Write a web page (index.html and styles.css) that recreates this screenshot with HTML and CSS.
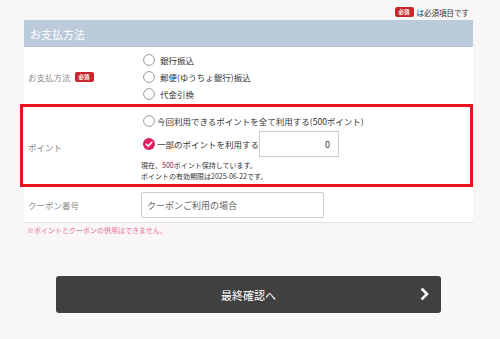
FILE: index.html
```html
<!DOCTYPE html>
<html lang="ja">
<head>
  <meta charset="UTF-8">
  <title>お支払方法</title>
  <link rel="stylesheet" href="styles.css">
</head>
<body>

<div class="req-note">
  <span class="badge">必須</span>
  <span>は必須項目です</span>
</div>

<div class="panel">
  <div class="panel-head">お支払方法</div>

  <!-- お支払方法 -->
  <div class="row row-pay">
    <div class="row-label">お支払方法 <span class="badge">必須</span></div>
    <div class="row-body">
      <label class="option">
        <svg class="radio" width="12" height="12" viewBox="0 0 12 12"><circle cx="6" cy="6" r="5.4" fill="#fff" stroke="#9a9a9a" stroke-width="1"/></svg>
        銀行振込
      </label>
      <label class="option">
        <svg class="radio" width="12" height="12" viewBox="0 0 12 12"><circle cx="6" cy="6" r="5.4" fill="#fff" stroke="#9a9a9a" stroke-width="1"/></svg>
        郵便(ゆうちょ銀行)振込
      </label>
      <label class="option">
        <svg class="radio" width="12" height="12" viewBox="0 0 12 12"><circle cx="6" cy="6" r="5.4" fill="#fff" stroke="#9a9a9a" stroke-width="1"/></svg>
        代金引換
      </label>
    </div>
  </div>

  <!-- ポイント -->
  <div class="row row-point">
    <div class="row-label">ポイント</div>
    <div class="row-body">
      <label class="option tight">
        <svg class="radio" width="12" height="12" viewBox="0 0 12 12"><circle cx="6" cy="6" r="5.4" fill="#fff" stroke="#9a9a9a" stroke-width="1"/></svg>
        今回利用できるポイントを全て利用する(500ポイント)
      </label>
      <div class="option tight option-input">
        <svg class="radio" width="12" height="12" viewBox="0 0 12 12"><circle cx="6" cy="6" r="6" fill="#e31c5f"/><path d="M3.2 6.1 L5.2 8.1 L8.9 4.2" fill="none" stroke="#fff" stroke-width="1.6" stroke-linecap="round" stroke-linejoin="round"/></svg>
        一部のポイントを利用する
        <input class="point-input" type="text" value="0">
      </div>
      <div class="point-note">
        現在、500ポイント保持しています。<br>
        ポイントの有効期限は2025-06-22です。
      </div>
    </div>
  </div>

  <!-- クーポン -->
  <div class="row row-coupon">
    <div class="row-label">クーポン番号</div>
    <div class="row-body">
      <input class="coupon-input" type="text" placeholder="クーポンご利用の場合">
    </div>
  </div>
</div>

<div class="notice">※ポイントとクーポンの併用はできません。</div>

<button class="next-btn">
  最終確認へ
  <svg class="chevron" width="10" height="12" viewBox="0 0 10 12"><path d="M2.5 1.5 L7 6 L2.5 10.5" fill="none" stroke="#fff" stroke-width="2.6" stroke-linecap="square"/></svg>
</button>

</body>
</html>
```

FILE: styles.css
```css
* { box-sizing: border-box; }
body {
  margin: 0;
  background-color: #f8f6f7;
  font-family: "Noto Sans CJK JP", "Noto Sans", sans-serif;
  color: #333;
}
.req-note {
  display: flex;
  justify-content: flex-end;
  align-items: center;
  gap: 3px;
  height: 12px;
  margin: 6px 31px 2px 0;
  font-size: 7.5px;
}
.badge {
  display: inline-flex;
  align-items: center;
  justify-content: center;
  width: 19px;
  height: 10px;
  border-radius: 2px;
  background-color: #c9252d;
  color: #fff;
  font-size: 5.5px;
  font-weight: bold;
}
.panel {
  margin-left: 24px;
  width: 449px;
  background-color: #fff;
}
.panel-head {
  height: 27px;
  display: flex;
  align-items: center;
  padding-left: 6px;
  background-color: #bccbdb;
  color: #fff;
  font-size: 11px;
}
.row {
  display: flex;
  align-items: center;
}
.row-label {
  width: 117px;
  padding-left: 4px;
  display: flex;
  align-items: center;
  gap: 4px;
  font-size: 8.5px;
  color: #888;
}
.row-body {
  flex: 1;
}
.row-pay {
  padding: 4px 0 2px;
}
.option {
  display: flex;
  align-items: center;
  gap: 5px;
  height: 17px;
  padding-left: 2px;
  font-size: 8.5px;
}
.option.tight {
  gap: 2px;
}
.row-point {
  margin-left: -4px;
  border: 3px solid #e8141f;
  padding: 5px 0 2px;
}
.row-point .row-label {
  width: 118px;
  padding-left: 5px;
}
.option-input {
  height: 26px;
  margin-top: 2px;
}
.point-input {
  width: 80px;
  height: 26px;
  margin-left: -2px;
  padding: 0 8px;
  border: 1px solid #ccc;
  text-align: right;
  font-family: inherit;
  font-size: 9px;
  color: #333;
  outline: none;
}
.point-note {
  margin-top: 3px;
  font-size: 7px;
  line-height: 11px;
}
.row-coupon {
  padding: 5px 0 4px;
  border-bottom: 1px solid #e6e0e3;
}
.coupon-input {
  display: block;
  width: 183px;
  height: 26px;
  padding: 0 5px;
  border: 1px solid #ccc;
  border-radius: 2px;
  font-family: inherit;
  font-size: 9px;
  outline: none;
}
.coupon-input::placeholder {
  color: #666;
}
.notice {
  margin: 2px 0 0 27px;
  font-size: 7px;
  line-height: 11px;
  color: #e8709a;
}
.next-btn {
  position: relative;
  display: flex;
  align-items: center;
  justify-content: center;
  width: 385px;
  height: 37px;
  margin: 40px 0 0 56px;
  border: none;
  border-radius: 3px;
  background-color: #404040;
  color: #fff;
  font-family: inherit;
  font-size: 11px;
}
.chevron {
  position: absolute;
  right: 11px;
  top: 12px;
}
```
